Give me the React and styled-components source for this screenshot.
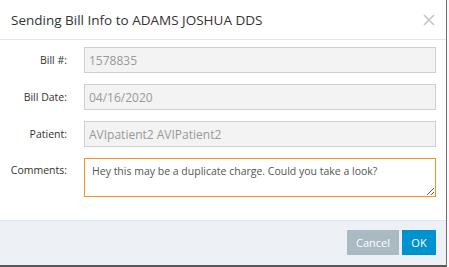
import React, { useState } from "react";
import styled, { createGlobalStyle } from "styled-components";

const GlobalStyle = createGlobalStyle`
  html, body {
    margin: 0;
    padding: 0;
    background: #fafafa;
    font-family: "Open Sans", "Liberation Sans", sans-serif;
  }
`;

const Modal = styled.div`
  width: 446px;
  height: 265px;
  background: #fff;
  border-right: 1px solid #6f6f6f;
  border-bottom: 2px solid #5a5a5a;
  display: flex;
  flex-direction: column;
`;

const Header = styled.div`
  height: 40px;
  box-sizing: border-box;
  border-bottom: 1px solid #e5e5e5;
  display: flex;
  align-items: center;
  justify-content: space-between;
  padding: 1px 10px 0 11px;
`;

const Title = styled.h4`
  margin: 0;
  font-size: 13.5px;
  font-weight: 400;
  color: #333;
`;

const Close = styled.button`
  border: none;
  background: none;
  padding: 0;
  width: 14px;
  height: 14px;
  display: flex;
  cursor: pointer;
`;

const Body = styled.div`
  flex: 1;
  padding: 7px 10px 0 0;
  display: grid;
  grid-template-columns: 67px 1fr;
  column-gap: 17px;
  row-gap: 11px;
  align-content: start;
`;

const Label = styled.label`
  font-size: 10.5px;
  color: #333;
  text-align: right;
  align-self: ${(p) => (p.$top ? "start" : "center")};
  padding-top: ${(p) => (p.$top ? "5px" : "0")};
`;

const Field = styled.input`
  box-sizing: border-box;
  height: 26px;
  width: 100%;
  border: 1px solid #cfcfcf;
  background: #f3f3f3;
  color: #999;
  font-family: inherit;
  font-size: 12px;
  padding: 0 4px;
  outline: none;
`;

const Comments = styled.textarea`
  box-sizing: border-box;
  height: 39px;
  width: 100%;
  border: 1px solid #f7931e;
  background: #fff;
  color: #555;
  font-family: inherit;
  font-size: 10.5px;
  padding: 5px 7px 4px;
  resize: vertical;
  outline: none;
`;

const Footer = styled.div`
  height: 45px;
  box-sizing: border-box;
  background: #edf1f5;
  border-top: 1px solid #e2e7ec;
  display: flex;
  justify-content: flex-end;
  align-items: flex-start;
  gap: 3px;
  padding: 9px 10px 0 0;
`;

const Button = styled.button`
  height: 25px;
  border: none;
  padding: 0 ${(p) => (p.$primary ? "9px" : "6px")};
  min-width: ${(p) => (p.$primary ? "34px" : "52px")};
  background: ${(p) => (p.$primary ? "#0091cf" : "#a9bac3")};
  color: #fff;
  font-family: inherit;
  font-size: 11px;
  cursor: pointer;
`;

export default function App() {
  const [comment, setComment] = useState(
    "Hey this may be a duplicate charge. Could you take a look?"
  );
  return (
    <>
      <GlobalStyle />
      <Modal>
        <Header>
          <Title>Sending Bill Info to ADAMS JOSHUA DDS</Title>
          <Close aria-label="Close">
            <svg width="14" height="14" viewBox="0 0 14 14">
              <path d="M2 2 L12 12 M12 2 L2 12" stroke="#c4c4c4" strokeWidth="1.6" />
            </svg>
          </Close>
        </Header>
        <Body>
          <Label>Bill #:</Label>
          <Field disabled value="1578835" readOnly />
          <Label>Bill Date:</Label>
          <Field disabled value="04/16/2020" readOnly />
          <Label>Patient:</Label>
          <Field disabled value="AVIpatient2 AVIPatient2" readOnly />
          <Label $top>Comments:</Label>
          <Comments value={comment} onChange={(e) => setComment(e.target.value)} />
        </Body>
        <Footer>
          <Button>Cancel</Button>
          <Button $primary>OK</Button>
        </Footer>
      </Modal>
    </>
  );
}
